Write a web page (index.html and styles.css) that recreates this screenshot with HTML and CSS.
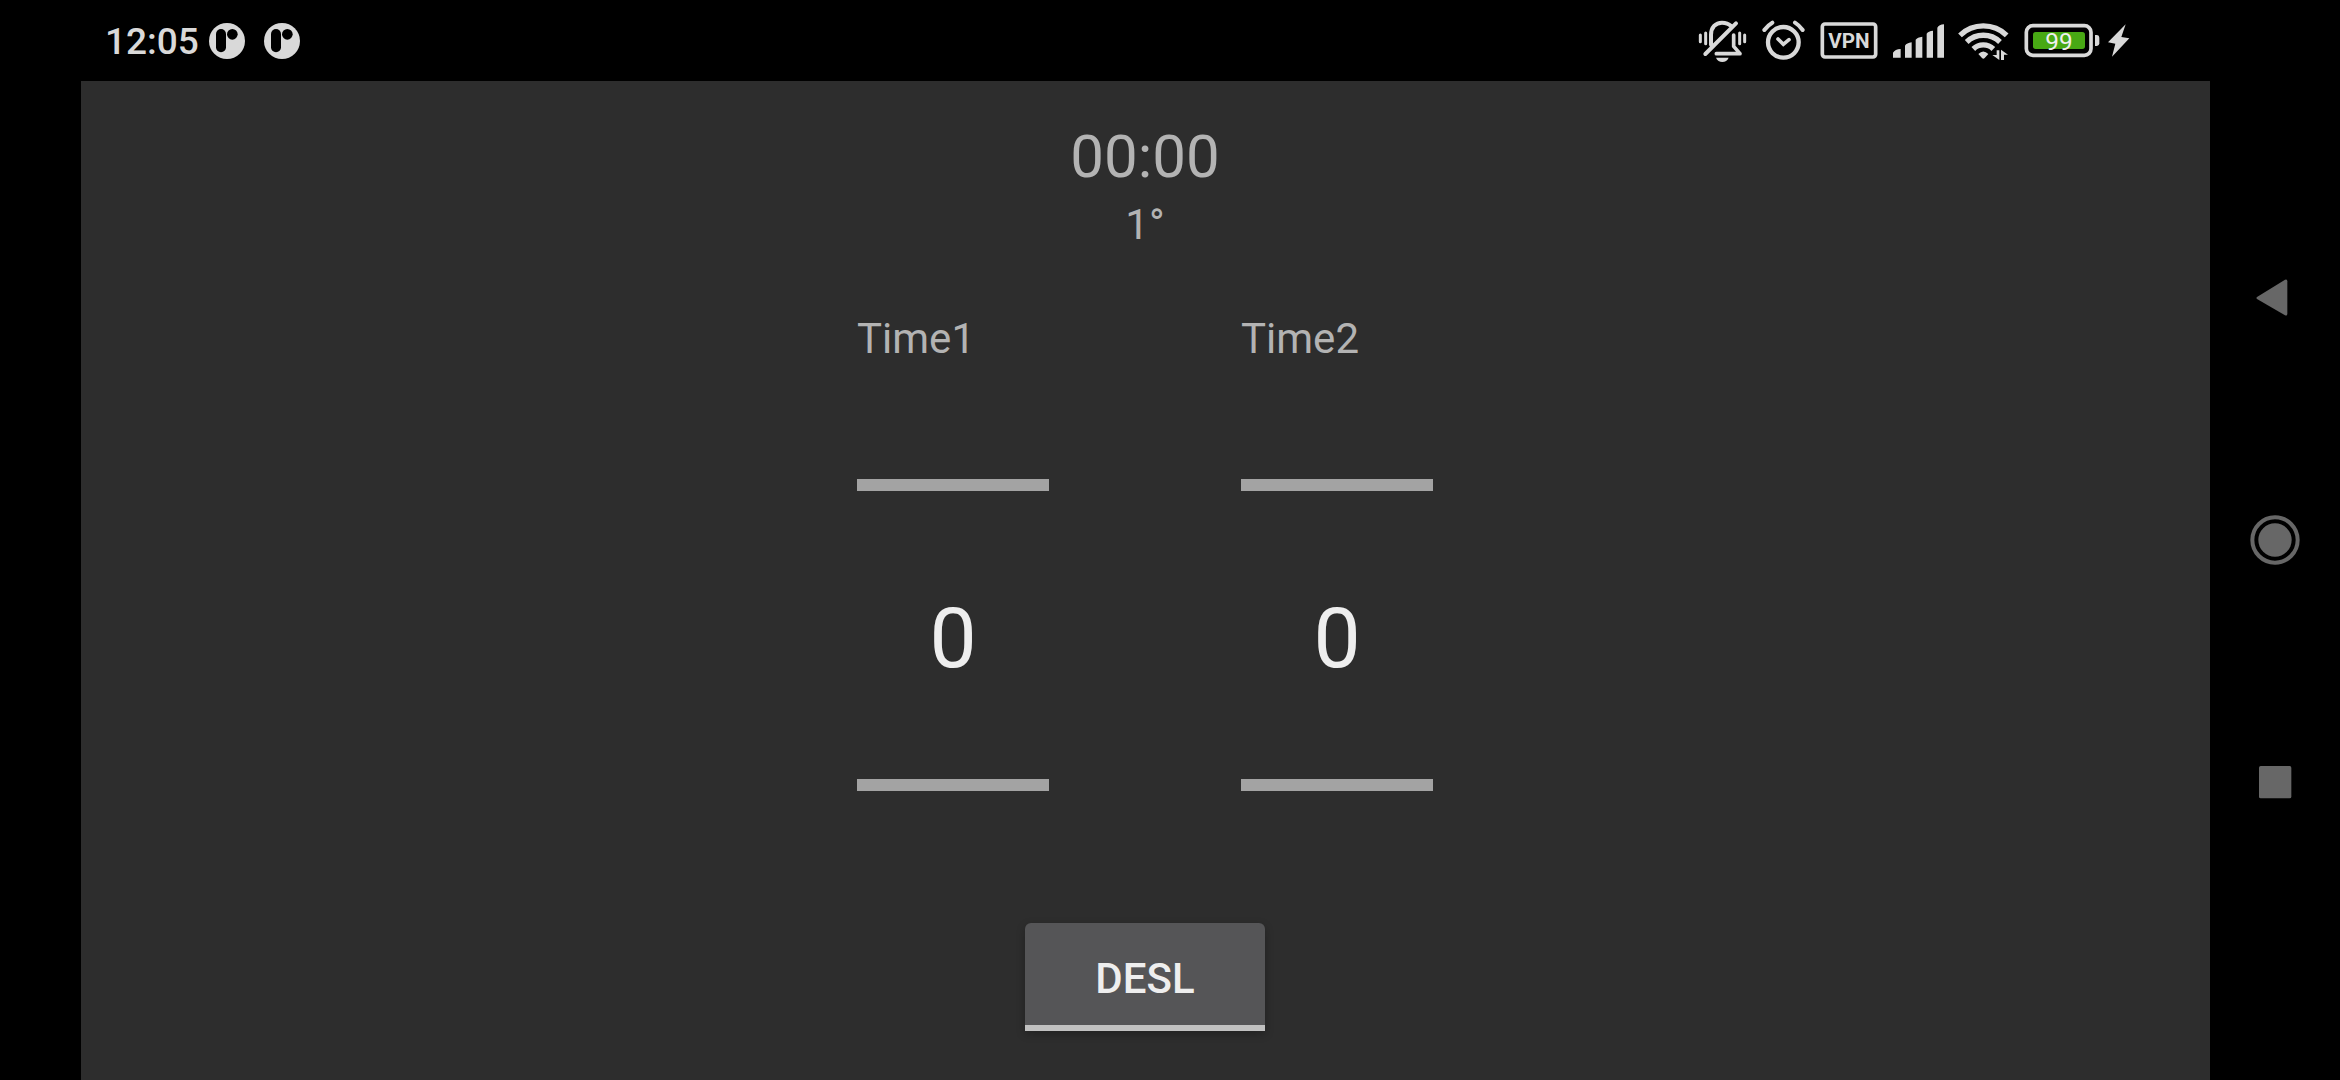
FILE: index.html
```html
<!DOCTYPE html>
<html lang="pt">
<head>
<meta charset="utf-8">
<meta name="viewport" content="width=device-width, initial-scale=1">
<title>Placar</title>
<link rel="stylesheet" href="styles.css">
</head>
<body>
<div class="device">
  <header class="status">
    <div class="status-left">
      <time class="clock">12:05</time>
      <svg class="notice" viewBox="0 0 108 108" aria-hidden="true"><circle cx="54" cy="54" r="54"/><g class="hole"><rect x="21" y="18" width="30" height="70" rx="15"/><circle cx="70" cy="34" r="16"/></g></svg>
      <svg class="notice" viewBox="0 0 108 108" aria-hidden="true"><circle cx="54" cy="54" r="54"/><g class="hole"><rect x="21" y="18" width="30" height="70" rx="15"/><circle cx="70" cy="34" r="16"/></g></svg>
    </div>
    <div class="status-right">
      <svg class="icon" width="51" viewBox="51 54 153 135" aria-hidden="true">
        <g class="line" stroke-width="11">
          <path d="M93 134V105C93 82 107 68 126 68Q143 68 153 78M76 162L168 70" stroke-width="12"/>
          <path d="M109 161H180L161 139V105" stroke-linejoin="round"/>
        </g>
        <g class="line" stroke-width="9"><path d="M61 105V125M77 99V131M179 99V131M194 105V125"/></g>
        <path d="M108 173H146Q140 186 127 186T108 173Z"/>
      </svg>
      <svg class="icon" width="45" viewBox="243 54 135 135" aria-hidden="true">
        <g class="line"><circle cx="310" cy="127" r="46" stroke-width="13"/>
        <path d="M253 90Q263 76 277 68M345 68Q358 76 368 90" stroke-width="12"/>
        <path d="M294 117L310 133L327 119" stroke-width="11"/></g>
      </svg>
      <svg class="icon" width="59" viewBox="417 54 177 135" role="img" aria-label="VPN">
        <rect class="line" x="427" y="72" width="160" height="99" rx="8" stroke-width="11"/>
        <text class="vpn" x="507" y="143">VPN</text>
      </svg>
      <svg class="icon" width="54" viewBox="33 54 162 135" aria-hidden="true">
        <path d="M39 173V158Q45 148 62 147V173ZM75 173V137Q80 129 95 127V173ZM107 173V119Q112 112 127 110V173ZM140 173V101Q145 93 159 92V173ZM172 173V83Q177 74 192 73V173Z"/>
      </svg>
      <svg class="icon" width="51" viewBox="234 54 153 135" aria-hidden="true">
        <g class="line butt" stroke-width="16"><path d="M240 106A101 101 0 0 1 380 106M260 126A72 72 0 0 1 360 126M280 147A43 43 0 0 1 340 147"/></g>
        <path d="M295 162Q310 147 325 162L314 174Q310 179 306 174Z"/>
        <path d="M350 151H358V180L337 165H350ZM363 180V149L384 164H372V180Z"/>
      </svg>
      <div class="power">
        <svg class="icon" width="79" viewBox="426 54 237 135" role="img" aria-label="99%">
          <rect class="line" x="439" y="77" width="194" height="89" rx="20" stroke-width="11"/>
          <rect class="charge" x="459" y="96" width="156" height="51" rx="8"/>
          <path d="M645 105H651Q658 106 658 113V130Q658 137 651 138H645Z"/>
          <text class="level" x="537" y="149">99</text>
        </svg>
        <svg class="icon" width="23" viewBox="681 54 69 135" aria-hidden="true"><path d="M737 73L684 127L706 131L696 170L748 115L724 111Z"/></svg>
      </div>
    </div>
  </header>

  <main class="board">
    <div class="timer">00:00</div>
    <div class="period">1°</div>
    <div class="teams">
      <div class="team">
        <label class="team-name" for="score1">Time1</label>
        <input class="score" id="score1" type="text" inputmode="numeric" value="0">
      </div>
      <div class="team">
        <label class="team-name" for="score2">Time2</label>
        <input class="score" id="score2" type="text" inputmode="numeric" value="0">
      </div>
    </div>
    <button class="toggle" type="button">DESL</button>
  </main>

  <nav class="keys">
    <button class="key" type="button" aria-label="Voltar"><svg viewBox="0 0 150 150"><path d="M21 72L105 20Q112 17 112 25V122Q112 130 105 127L21 78Q17 75 21 72Z"/></svg></button>
    <button class="key" type="button" aria-label="Início"><svg viewBox="0 0 150 150"><circle cx="75" cy="75" r="50"/><circle class="ring" cx="75" cy="75" r="68"/></svg></button>
    <button class="key" type="button" aria-label="Recentes"><svg viewBox="0 0 150 150"><rect x="27" y="27" width="97" height="97" rx="5"/></svg></button>
  </nav>
</div>
</body>
</html>
```
FILE: styles.css
```css
* { box-sizing: border-box; }

body {
  margin: 0;
  background: #000;
  font-family: Roboto, "Noto Sans", sans-serif;
}

.device {
  display: grid;
  grid-template-columns: 81px 1fr 130px;
  grid-template-rows: 81px 1fr;
  min-height: 100vh;
}

.status {
  grid-column: 1 / 3;
  display: flex;
  justify-content: space-between;
  align-items: center;
  padding: 0 80px 0 105px;
  color: #d9d9d9;
}

.status-left,
.status-right,
.power {
  display: flex;
  align-items: center;
}

.clock {
  width: 104px;
  padding-top: 2px;
  font-size: 37px;
  font-weight: 500;
  line-height: 44px;
}

.notice {
  width: 36px;
  height: 36px;
  margin-right: 19px;
  fill: #d9d9d9;
}

.hole { fill: #000; }

.status-right { gap: 13px; }

.power { gap: 6px; }

.icon {
  height: 45px;
  fill: #d9d9d9;
}

.line {
  fill: none;
  stroke: #d9d9d9;
  stroke-linecap: round;
}

.butt { stroke-linecap: butt; }

.charge { fill: #48a914; }

.vpn,
.level {
  text-anchor: middle;
  font-size: 62px;
  font-weight: 700;
}

.level {
  fill: #f0f0f0;
  font-size: 73px;
  font-weight: 400;
}

.board {
  grid-column: 2;
  display: flex;
  flex-direction: column;
  align-items: center;
  padding: 41px 1px 48px 0;
  background: #2d2d2d;
  color: #b3b3b3;
}

.timer {
  font-size: 60px;
  line-height: 70px;
}

.period,
.team-name {
  font-size: 42px;
  line-height: 66px;
}

.teams {
  display: flex;
  gap: 192px;
  margin: 48px 0 132px;
}

.team {
  display: flex;
  flex-direction: column;
  gap: 107px;
  width: 192px;
}

.score {
  width: 100%;
  height: 312px;
  padding: 6px 0 0;
  border: solid #a3a3a3;
  border-width: 12px 0;
  border-radius: 0;
  outline: none;
  background: transparent;
  color: #eee;
  font: 400 84px Roboto, "Noto Sans", sans-serif;
  text-align: center;
}

.toggle {
  width: 240px;
  height: 108px;
  padding: 8px 0 0;
  border: 0;
  border-bottom: 6px solid #c1c1c1;
  border-radius: 6px 6px 0 0;
  background: #555557;
  box-shadow: 0 3px 8px rgba(0, 0, 0, 0.25);
  color: #eee;
  font: 500 42px Roboto, "Noto Sans", sans-serif;
}

.keys {
  grid-column: 3;
  grid-row: 1 / 3;
  display: flex;
  flex-direction: column;
  justify-content: center;
  align-items: center;
  gap: 192px;
}

.key {
  width: 50px;
  height: 50px;
  padding: 0;
  border: 0;
  background: none;
}

.key svg {
  display: block;
  fill: #676767;
}

.key .ring {
  fill: none;
  stroke: #676767;
  stroke-width: 12px;
}
```
